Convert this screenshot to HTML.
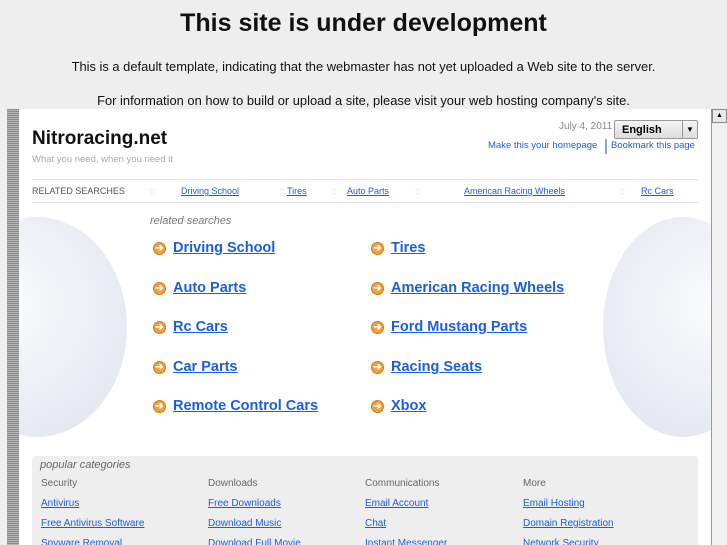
<!DOCTYPE html>
<html><head><style>
*{margin:0;padding:0;box-sizing:border-box}
html,body{width:727px;height:545px;overflow:hidden}
body{background:#eeeeee;font-family:"Liberation Sans",sans-serif;position:relative}
.t{position:absolute;left:0;width:727px;text-align:center;color:#111}
a{color:#1a5fe0;text-decoration:underline}
.frame{position:absolute;left:7px;top:109px;width:720px;height:436px;background:#fff;overflow:hidden}
.strip{position:absolute;left:0;top:0;width:12px;height:436px;background:repeating-linear-gradient(#8a8a8a 0 1px,#b5b5b5 1px 2px);z-index:2}
.sb{position:absolute;left:704px;top:0;width:16px;height:436px;background:#f0f0f0;border-left:1px solid #999;z-index:2}
.sb .btn{width:15px;height:14px;border:1px solid #888;background:#e8e8e8;font-size:7px;text-align:center;line-height:12px}
.a{position:absolute}
.arr{display:inline-block;width:13px;height:13px;border-radius:50%;background:#f0a040;border:1px solid #d07a10;color:#fff;font-size:10px;line-height:11px;text-align:center;vertical-align:middle;margin-right:7px;font-weight:bold}
.big{font-size:14.5px;font-weight:bold}
.cat div{font-size:10px;height:20px}
</style></head><body>
<div class="t" style="top:9px;font-size:25px;font-weight:bold">This site is under development</div>
<div class="t" style="top:59px;font-size:12.9px">This is a default template, indicating that the webmaster has not yet uploaded a Web site to the server.</div>
<div class="t" style="top:93px;font-size:12.9px">For information on how to build or upload a site, please visit your web hosting company's site.</div>
<div class="frame">
<div class="strip"></div>
<div class="a" style="left:25px;top:19px;font-size:19px;font-weight:bold;color:#111">Nitroracing.net</div>
<div class="a" style="left:25px;top:45px;font-size:9.5px;color:#aaa">What you need, when you need it</div>
<div class="a" style="left:552px;top:12px;font-size:10px;color:#888">July 4, 2011</div>
<div class="a" style="left:607px;top:11px;width:84px;height:19px;border:1px solid #999;border-radius:2px;background:linear-gradient(#f4f4f4,#ddd);font-size:11px;font-weight:bold;padding:3px 0 0 7px">English<span style="position:absolute;right:0;top:0;width:15px;height:17px;border-left:1px solid #999;font-size:8px;text-align:center;line-height:17px">▼</span></div>
<div class="a" style="left:481px;top:31px;font-size:9.5px;color:#1a5fe0">Make this your homepage</div>
<div class="a" style="left:598px;top:30px;width:2px;height:15px;background:#8ab"></div>
<div class="a" style="left:604px;top:31px;font-size:9.5px;color:#1a5fe0">Bookmark this page</div>
<div class="a" style="left:25px;top:70px;width:666px;border-top:1px solid #e5e5e5;border-bottom:1px solid #e5e5e5;height:24px;font-size:9px">
<span class="a" style="left:0;top:6px;color:#555">RELATED SEARCHES</span>
<span class="a" style="left:118px;top:6px;color:#ccc">::</span>
<a class="a" style="left:149px;top:6px">Driving School</a>
<span class="a" style="left:248px;top:6px;color:#ccc">::</span>
<a class="a" style="left:255px;top:6px">Tires</a>
<span class="a" style="left:300px;top:6px;color:#ccc">::</span>
<a class="a" style="left:315px;top:6px">Auto Parts</a>
<span class="a" style="left:383px;top:6px;color:#ccc">::</span>
<a class="a" style="left:432px;top:6px">American Racing Wheels</a>
<span class="a" style="left:588px;top:6px;color:#ccc">::</span>
<a class="a" style="left:609px;top:6px">Rc Cars</a>
</div>
<div class="a" style="left:-60px;top:108px;width:180px;height:220px;border-radius:50%;background:radial-gradient(circle at 30% 40%,#fafbfd,#dfe3ec)"></div>
<div class="a" style="left:596px;top:108px;width:160px;height:220px;border-radius:50%;background:radial-gradient(circle at 70% 40%,#fafbfd,#dfe3ec)"></div>
<div class="a" style="left:143px;top:106px;font-size:11px;font-style:italic;color:#777">related searches</div>
<div class="a big" style="left:146px;top:131px"><span class="arr">➔</span><a>Driving School</a></div>
<div class="a big" style="left:364px;top:131px"><span class="arr">➔</span><a>Tires</a></div>
<div class="a big" style="left:146px;top:171px"><span class="arr">➔</span><a>Auto Parts</a></div>
<div class="a big" style="left:364px;top:171px"><span class="arr">➔</span><a>American Racing Wheels</a></div>
<div class="a big" style="left:146px;top:210px"><span class="arr">➔</span><a>Rc Cars</a></div>
<div class="a big" style="left:364px;top:210px"><span class="arr">➔</span><a>Ford Mustang Parts</a></div>
<div class="a big" style="left:146px;top:250px"><span class="arr">➔</span><a>Car Parts</a></div>
<div class="a big" style="left:364px;top:250px"><span class="arr">➔</span><a>Racing Seats</a></div>
<div class="a big" style="left:146px;top:289px"><span class="arr">➔</span><a>Remote Control Cars</a></div>
<div class="a big" style="left:364px;top:289px"><span class="arr">➔</span><a>Xbox</a></div>
<div class="a" style="left:25px;top:347px;width:666px;height:100px;background:#eeeeee;border-radius:3px">
<div class="a" style="left:8px;top:3px;font-size:11px;font-style:italic;color:#666">popular categories</div>
<div class="a cat" style="left:9px;top:22px"><div style="color:#666">Security</div><div><a>Antivirus</a></div><div><a>Free Antivirus Software</a></div><div><a>Spyware Removal</a></div></div>
<div class="a cat" style="left:176px;top:22px"><div style="color:#666">Downloads</div><div><a>Free Downloads</a></div><div><a>Download Music</a></div><div><a>Download Full Movie</a></div></div>
<div class="a cat" style="left:333px;top:22px"><div style="color:#666">Communications</div><div><a>Email Account</a></div><div><a>Chat</a></div><div><a>Instant Messenger</a></div></div>
<div class="a cat" style="left:491px;top:22px"><div style="color:#666">More</div><div><a>Email Hosting</a></div><div><a>Domain Registration</a></div><div><a>Network Security</a></div></div>
</div>
<div class="sb"><div class="btn">▲</div></div>
</div>
</body></html>
